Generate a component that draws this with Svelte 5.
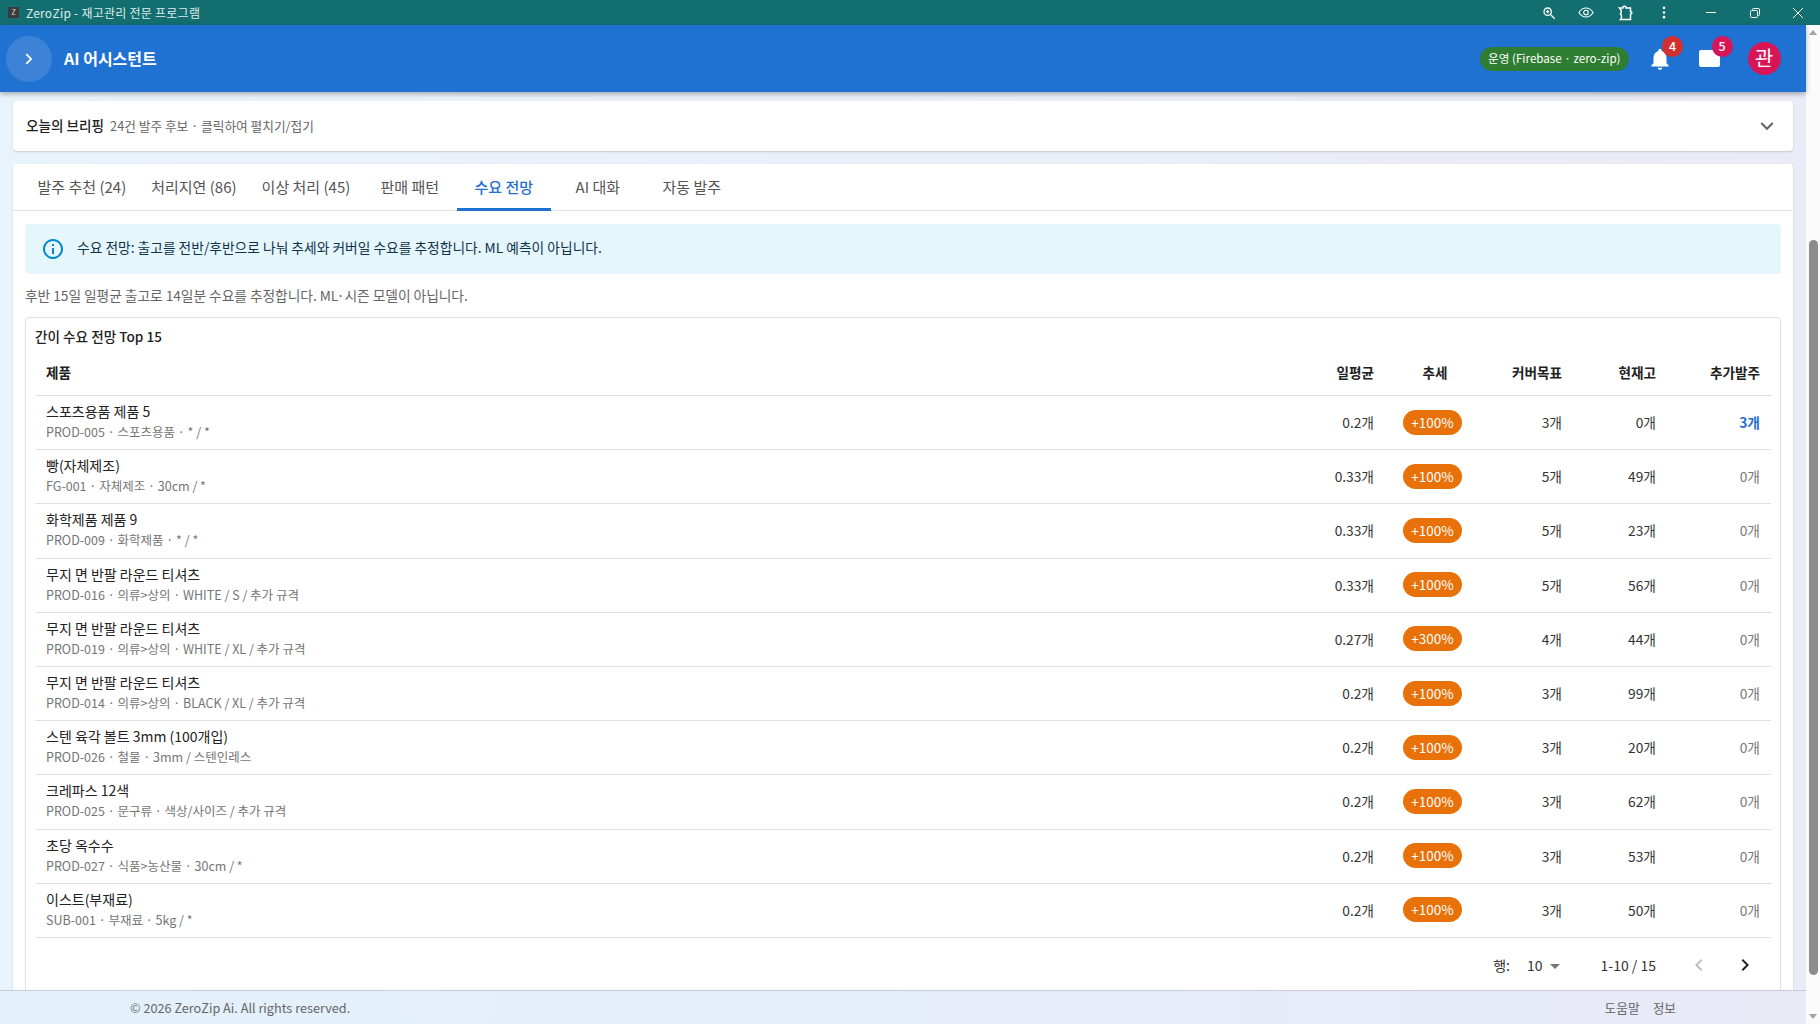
<script>
  const tabs = ['발주 추천 (24)', '처리지연 (86)', '이상 처리 (45)', '판매 패턴', '수요 전망', 'AI 대화', '자동 발주'];
  const activeTab = 4;

  const rows = [
    { name: '스포츠용품 제품 5', sub: 'PROD-005 · 스포츠용품 · * / *', avg: '0.2개', trend: '+100%', target: '3개', stock: '0개', order: '3개' },
    { name: '빵(자체제조)', sub: 'FG-001 · 자체제조 · 30cm / *', avg: '0.33개', trend: '+100%', target: '5개', stock: '49개', order: '0개' },
    { name: '화학제품 제품 9', sub: 'PROD-009 · 화학제품 · * / *', avg: '0.33개', trend: '+100%', target: '5개', stock: '23개', order: '0개' },
    { name: '무지 면 반팔 라운드 티셔츠', sub: 'PROD-016 · 의류>상의 · WHITE / S / 추가 규격', avg: '0.33개', trend: '+100%', target: '5개', stock: '56개', order: '0개' },
    { name: '무지 면 반팔 라운드 티셔츠', sub: 'PROD-019 · 의류>상의 · WHITE / XL / 추가 규격', avg: '0.27개', trend: '+300%', target: '4개', stock: '44개', order: '0개' },
    { name: '무지 면 반팔 라운드 티셔츠', sub: 'PROD-014 · 의류>상의 · BLACK / XL / 추가 규격', avg: '0.2개', trend: '+100%', target: '3개', stock: '99개', order: '0개' },
    { name: '스텐 육각 볼트 3mm (100개입)', sub: 'PROD-026 · 철물 · 3mm / 스텐인레스', avg: '0.2개', trend: '+100%', target: '3개', stock: '20개', order: '0개' },
    { name: '크레파스 12색', sub: 'PROD-025 · 문구류 · 색상/사이즈 / 추가 규격', avg: '0.2개', trend: '+100%', target: '3개', stock: '62개', order: '0개' },
    { name: '초당 옥수수', sub: 'PROD-027 · 식품>농산물 · 30cm / *', avg: '0.2개', trend: '+100%', target: '3개', stock: '53개', order: '0개' },
    { name: '이스트(부재료)', sub: 'SUB-001 · 부재료 · 5kg / *', avg: '0.2개', trend: '+100%', target: '3개', stock: '50개', order: '0개' }
  ];
</script>

<div class="window">
  <div class="titlebar">
    <span class="app-icon">Z</span>
    <span class="win-title">ZeroZip - 재고관리 전문 프로그램</span>
    <div class="win-tools">
      <svg class="tool t-zoom" viewBox="0 0 16 16" width="14" height="14" fill="none" stroke="#fff" stroke-width="1.5"><circle cx="6.5" cy="6.5" r="4.2"/><path d="M10 10l4.5 4.5M4.7 6.5h3.6M6.5 4.7v3.6"/></svg>
      <svg class="tool t-eye" viewBox="0 0 18 12" width="16" height="11" fill="none" stroke="#fff" stroke-width="1.2"><path d="M1 6c2-3.300 5-5 8-5s6 1.700 8 5c-2 3.300-5 5-8 5s-6-1.700-8-5z"/><circle cx="9" cy="6" r="2.600"/></svg>
      <svg class="tool t-ext" viewBox="0 0 16 16" width="16" height="16" fill="none" stroke="#fff" stroke-width="1.500"><path d="M1.500 3h3.200c0-2.400 3.400-2.400 3.400 0h4.400v3.400c1.800 0 1.800 2.600 0 2.600v5.500H2.500c1.400-1.800 1.400-3.800 0-5.500 1.200-2 1-4-1-6z"/></svg>
      <svg class="tool t-dots" viewBox="0 0 4 14" width="4" height="13" fill="#fff"><circle cx="2" cy="2" r="1.400"/><circle cx="2" cy="7" r="1.400"/><circle cx="2" cy="12" r="1.400"/></svg>
      <svg class="tool t-min" viewBox="0 0 10 2" width="10" height="2" fill="#fff"><rect width="10" height="1"/></svg>
      <svg class="tool t-max" viewBox="0 0 10 10" width="10" height="10" fill="none" stroke="#fff"><rect x="0.500" y="2.500" width="7" height="7" rx="1"/><path d="M2.500 2.500v-1a1 1 0 0 1 1-1h5a1 1 0 0 1 1 1v5a1 1 0 0 1-1 1h-1"/></svg>
      <svg class="tool t-close" viewBox="0 0 10 10" width="10" height="10" fill="none" stroke="#fff"><path d="M0 0l10 10M10 0L0 10"/></svg>
    </div>
  </div>

  <div class="body-row">
    <div class="page">
      <header class="appbar">
        <button class="menu-btn" aria-label="메뉴">
          <svg viewBox="0 0 24 24" width="22" height="22" fill="#fff"><path d="M9.700 6l-1.400 1.400L12.900 12l-4.600 4.600L9.700 18l6-6z"/></svg>
        </button>
        <h1>AI 어시스턴트</h1>
        <span class="spacer"></span>
        <span class="env-chip">운영 (Firebase · zero-zip)</span>
        <div class="icon-wrap bell">
          <svg viewBox="0 0 24 24" width="26" height="26" fill="#fff"><path d="M12 22c1.100 0 2-.9 2-2h-4c0 1.100.9 2 2 2zm6-6v-5c0-3.100-1.600-5.600-4.500-6.300V4c0-.8-.7-1.500-1.500-1.500s-1.500.7-1.500 1.500v.7C7.600 5.400 6 7.900 6 11v5l-2 2v1h16v-1l-2-2z"/></svg>
          <span class="badge red">4</span>
        </div>
        <div class="icon-wrap mail">
          <svg viewBox="0 0 21 17" width="21" height="17"><rect width="21" height="17" rx="2" fill="#fff"/><path d="M14 0h7v6z" fill="#1f71d2"/></svg>
          <span class="badge pink">5</span>
        </div>
        <span class="avatar">관</span>
      </header>

      <main class="content">
        <section class="card briefing">
          <strong>오늘의 브리핑</strong>
          <span class="brief-sub">24건 발주 후보 · 클릭하여 펼치기/접기</span>
          <span class="spacer"></span>
          <svg viewBox="0 0 24 24" width="26" height="26" fill="#666"><path d="M7.400 8.600L12 13.200l4.600-4.600L18 10l-6 6-6-6z"/></svg>
        </section>

        <section class="card panel">
          <nav class="tabs">
            {#each tabs as tab, i}
              <span class="tab" class:active={i === activeTab}>{tab}</span>
            {/each}
          </nav>

          <div class="panel-body">
            <div class="alert">
              <svg viewBox="0 0 24 24" width="24" height="24" fill="#0288d1"><path d="M11 7h2v2h-2zm0 4h2v6h-2zm1-9C6.500 2 2 6.500 2 12s4.500 10 10 10 10-4.500 10-10S17.500 2 12 2zm0 18c-4.400 0-8-3.600-8-8s3.600-8 8-8 8 3.600 8 8-3.600 8-8 8z"/></svg>
              <span>수요 전망: 출고를 전반/후반으로 나눠 추세와 커버일 수요를 추정합니다. ML 예측이 아닙니다.</span>
            </div>

            <p class="hint">후반 15일 일평균 출고로 14일분 수요를 추정합니다. ML·시즌 모델이 아닙니다.</p>

            <div class="table-card">
              <h2>간이 수요 전망 Top 15</h2>
              <table>
                <colgroup>
                  <col />
                  <col class="c-avg" />
                  <col class="c-trend" />
                  <col class="c-target" />
                  <col class="c-stock" />
                  <col class="c-order" />
                </colgroup>
                <thead>
                  <tr>
                    <th class="left">제품</th>
                    <th>일평균</th>
                    <th class="center">추세</th>
                    <th>커버목표</th>
                    <th>현재고</th>
                    <th>추가발주</th>
                  </tr>
                </thead>
                <tbody>
                  {#each rows as r}
                    <tr>
                      <td class="left">
                        <div class="p-name">{r.name}</div>
                        <div class="p-sub">{r.sub}</div>
                      </td>
                      <td>{r.avg}</td>
                      <td class="center"><span class="pill">{r.trend}</span></td>
                      <td>{r.target}</td>
                      <td>{r.stock}</td>
                      <td class={r.order === '0개' ? 'muted' : 'need'}>{r.order}</td>
                    </tr>
                  {/each}
                </tbody>
              </table>

              <div class="pager">
                <span class="pg-label">행:</span>
                <span class="pg-size">10</span>
                <span class="pg-caret"></span>
                <span class="pg-range">1-10 / 15</span>
                <svg class="pg-prev" viewBox="0 0 24 24" width="24" height="24" fill="#bdbdbd"><path d="M15.400 7.400L14 6l-6 6 6 6 1.400-1.400L10.800 12z"/></svg>
                <svg class="pg-next" viewBox="0 0 24 24" width="24" height="24" fill="#222"><path d="M10 6L8.600 7.400 13.200 12l-4.600 4.600L10 18l6-6z"/></svg>
              </div>
            </div>
          </div>
        </section>
      </main>

      <footer class="footer">
        <span class="copy">© 2026 ZeroZip Ai. All rights reserved.</span>
        <span class="spacer"></span>
        <span class="foot-link">도움말</span>
        <span class="foot-link last">정보</span>
      </footer>
    </div>

    <div class="scrollbar">
      <span class="arrow up"></span>
      <span class="thumb"></span>
      <span class="arrow down"></span>
    </div>
  </div>
</div>

<style>
  :global(body) {
    margin: 0;
    overflow: hidden;
    font-family: "Noto Sans CJK KR", "Noto Sans", sans-serif;
    color: #212121;
  }
  .window {
    width: 1820px;
    height: 1024px;
    display: flex;
    flex-direction: column;
    overflow: hidden;
  }
  .titlebar {
    height: 25px;
    flex: none;
    display: flex;
    align-items: center;
    background: #136e70;
    color: #dfeceb;
  }
  .app-icon {
    width: 11px;
    height: 11px;
    margin-left: 8px;
    background: #3b3b3b;
    color: #ddd;
    font-size: 7px;
    line-height: 11px;
    text-align: center;
  }
  .win-title {
    margin-left: 7px;
    font-size: 12px;
    letter-spacing: 0.25px;
  }
  .win-tools {
    margin-left: auto;
    display: flex;
    align-items: center;
  }
  .tool { display: block; }
  .t-zoom { margin-right: 22.8px; }
  .t-eye { margin-right: 23.2px; }
  .t-ext { margin-right: 28px; }
  .t-dots { margin-right: 40.5px; }
  .t-min { margin-right: 34px; }
  .t-max { margin-right: 33px; }
  .t-close { margin-right: 17px; }

  .body-row {
    flex: 1;
    min-height: 0;
    display: flex;
  }
  .page {
    flex: 1;
    min-width: 0;
    display: flex;
    flex-direction: column;
    background: linear-gradient(90deg, #e9f3fb, #eaebf6);
  }
  .appbar {
    height: 67px;
    flex: none;
    display: flex;
    align-items: center;
    background: #1f71d2;
    color: #fff;
    box-shadow: 0 2px 5px rgba(0, 0, 0, 0.3);
    position: relative;
    z-index: 2;
  }
  .menu-btn {
    width: 46px;
    height: 46px;
    margin-left: 6px;
    padding: 0;
    display: flex;
    align-items: center;
    justify-content: center;
    border: none;
    border-radius: 50%;
    background: rgba(255, 255, 255, 0.13);
  }
  h1 {
    margin: 0 0 2px 12px;
    font-size: 16px;
    font-weight: 600;
  }
  .spacer { flex: 1; }
  .env-chip {
    height: 24px;
    padding: 0 8.5px;
    border-radius: 12px;
    background: #2e7d32;
    font-size: 11.6px;
    line-height: 23px;
  }
  .icon-wrap {
    position: relative;
    display: flex;
    align-items: center;
  }
  .bell { margin-left: 18px; }
  .mail { margin-left: 26px; }
  .badge {
    position: absolute;
    width: 21px;
    height: 21px;
    border-radius: 50%;
    color: #fff;
    font-size: 12.5px;
    font-weight: 500;
    line-height: 20px;
    text-align: center;
  }
  .bell .badge { left: 15px; top: -10px; }
  .mail .badge { left: 12.5px; top: -14px; }
  .red { background: #d32f2f; }
  .pink { background: #d81557; }
  .avatar {
    width: 33px;
    height: 33px;
    margin: 0 25.5px 0 27.5px;
    border-radius: 50%;
    background: #d81557;
    font-size: 20px;
    line-height: 31px;
    text-align: center;
  }

  .content {
    flex: 1;
    min-height: 0;
    overflow: hidden;
    padding: 9px 13px 0 13px;
  }
  .card {
    background: #fff;
    border-radius: 4px;
    box-shadow: 0 1px 2px rgba(0, 0, 0, 0.16);
  }
  .briefing {
    height: 50px;
    display: flex;
    align-items: center;
    padding: 0 13px;
    font-size: 13.6px;
  }
  .briefing strong { font-weight: 500; margin-bottom: 2px; }
  .brief-sub {
    margin-left: 6px;
    margin-bottom: 2px;
    font-size: 12.7px;
    color: #666;
  }
  .panel { margin-top: 13px; }
  .tabs {
    height: 46px;
    display: flex;
    padding-left: 12px;
    border-bottom: 1px solid #e0e0e0;
  }
  .tab {
    min-width: 94px;
    padding: 1px 12.5px 0;
    box-sizing: border-box;
    text-align: center;
    font-size: 15px;
    line-height: 44px;
    color: #555;
    border-bottom: 2px solid transparent;
    margin-bottom: -1px;
  }
  .tab.active {
    color: #1f71d2;
    font-weight: 500;
    border-bottom: 3px solid #1f71d2;
  }
  .panel-body { padding: 13px 12px 40px 12px; }
  .alert {
    height: 50px;
    display: flex;
    align-items: center;
    gap: 12px;
    padding-left: 16px;
    border-radius: 4px;
    background: #e5f6fd;
    color: #0f3349;
    font-size: 13.76px;
  }
  .alert span { margin-bottom: 4px; }
  .hint {
    margin: 11px 0 0;
    font-size: 13.76px;
    letter-spacing: -0.05px;
    line-height: 20px;
    color: #666;
  }
  .table-card {
    margin-top: 12px;
    padding: 0 9px;
    border: 1px solid #e0e0e0;
    border-radius: 4px;
    background: #fff;
  }
  h2 {
    margin: 0;
    padding-top: 7px;
    padding-bottom: 1px;
    font-size: 13.6px;
    font-weight: 500;
    line-height: 22px;
  }
  table {
    width: 100%;
    table-layout: fixed;
    border-collapse: collapse;
    font-size: 13.76px;
  }
  .c-avg { width: 90px; }
  .c-trend { width: 100px; }
  .c-target { width: 88px; }
  .c-stock { width: 94px; }
  .c-order { width: 104px; }
  th, td {
    padding: 0 11px;
    text-align: right;
    border-bottom: 1px solid #e0e0e0;
  }
  th {
    height: 47px;
    font-size: 13.6px;
    font-weight: 600;
  }
  td {
    box-sizing: border-box;
    height: 54.2px;
    padding-bottom: 1px;
    color: #333;
  }
  td.left { padding-bottom: 3px; }
  .left { text-align: left; }
  .center { text-align: center; }
  .p-name {
    font-size: 14px;
    line-height: 21px;
    color: #222;
  }
  .p-sub {
    font-size: 12.5px;
    line-height: 19px;
    color: #757575;
  }
  .pill {
    display: inline-block;
    margin-right: 5px;
    padding: 0 8px;
    border-radius: 13px;
    background: #e8710a;
    color: #fff;
    font-size: 13.5px;
    line-height: 25px;
  }
  .muted { color: #777; }
  .need { color: #1f71d2; font-weight: 600; }
  .pager {
    height: 54px;
    display: flex;
    align-items: center;
    justify-content: flex-end;
    font-size: 14px;
    color: #333;
  }
  .pg-size { margin-left: 17px; }
  .pg-caret {
    width: 0;
    height: 0;
    margin: 3px 0 0 7px;
    border: 5.5px solid transparent;
    border-top-color: #757575;
    border-bottom: none;
  }
  .pg-range { margin-left: 41px; }
  .pg-prev { margin-left: 31px; }
  .pg-next { margin: 0 14px 0 22px; }

  .footer {
    height: 33px;
    flex: none;
    display: flex;
    align-items: center;
    border-top: 1px solid #c6ccd6;
    background: linear-gradient(90deg, #e3f1fb, #e8eaf6);
    font-size: 12.7px;
    color: #666;
    position: relative;
    z-index: 1;
  }
  .copy { margin-left: 130px; }
  .foot-link.last { margin: 0 130px 0 13px; }

  .scrollbar {
    width: 14px;
    flex: none;
    display: flex;
    flex-direction: column;
    align-items: center;
    background: #fbfbfb;
  }
  .thumb {
    width: 9px;
    height: 735px;
    margin-top: 205px;
    border-radius: 5px;
    background: #8c8c8c;
  }
  .arrow {
    width: 0;
    height: 0;
    border-left: 4px solid transparent;
    border-right: 4px solid transparent;
  }
  .arrow.up {
    margin-top: 5px;
    border-bottom: 5px solid #a3a3a3;
  }
  .arrow.down {
    margin-top: auto;
    margin-bottom: 5px;
    border-top: 5px solid #a3a3a3;
  }
</style>
